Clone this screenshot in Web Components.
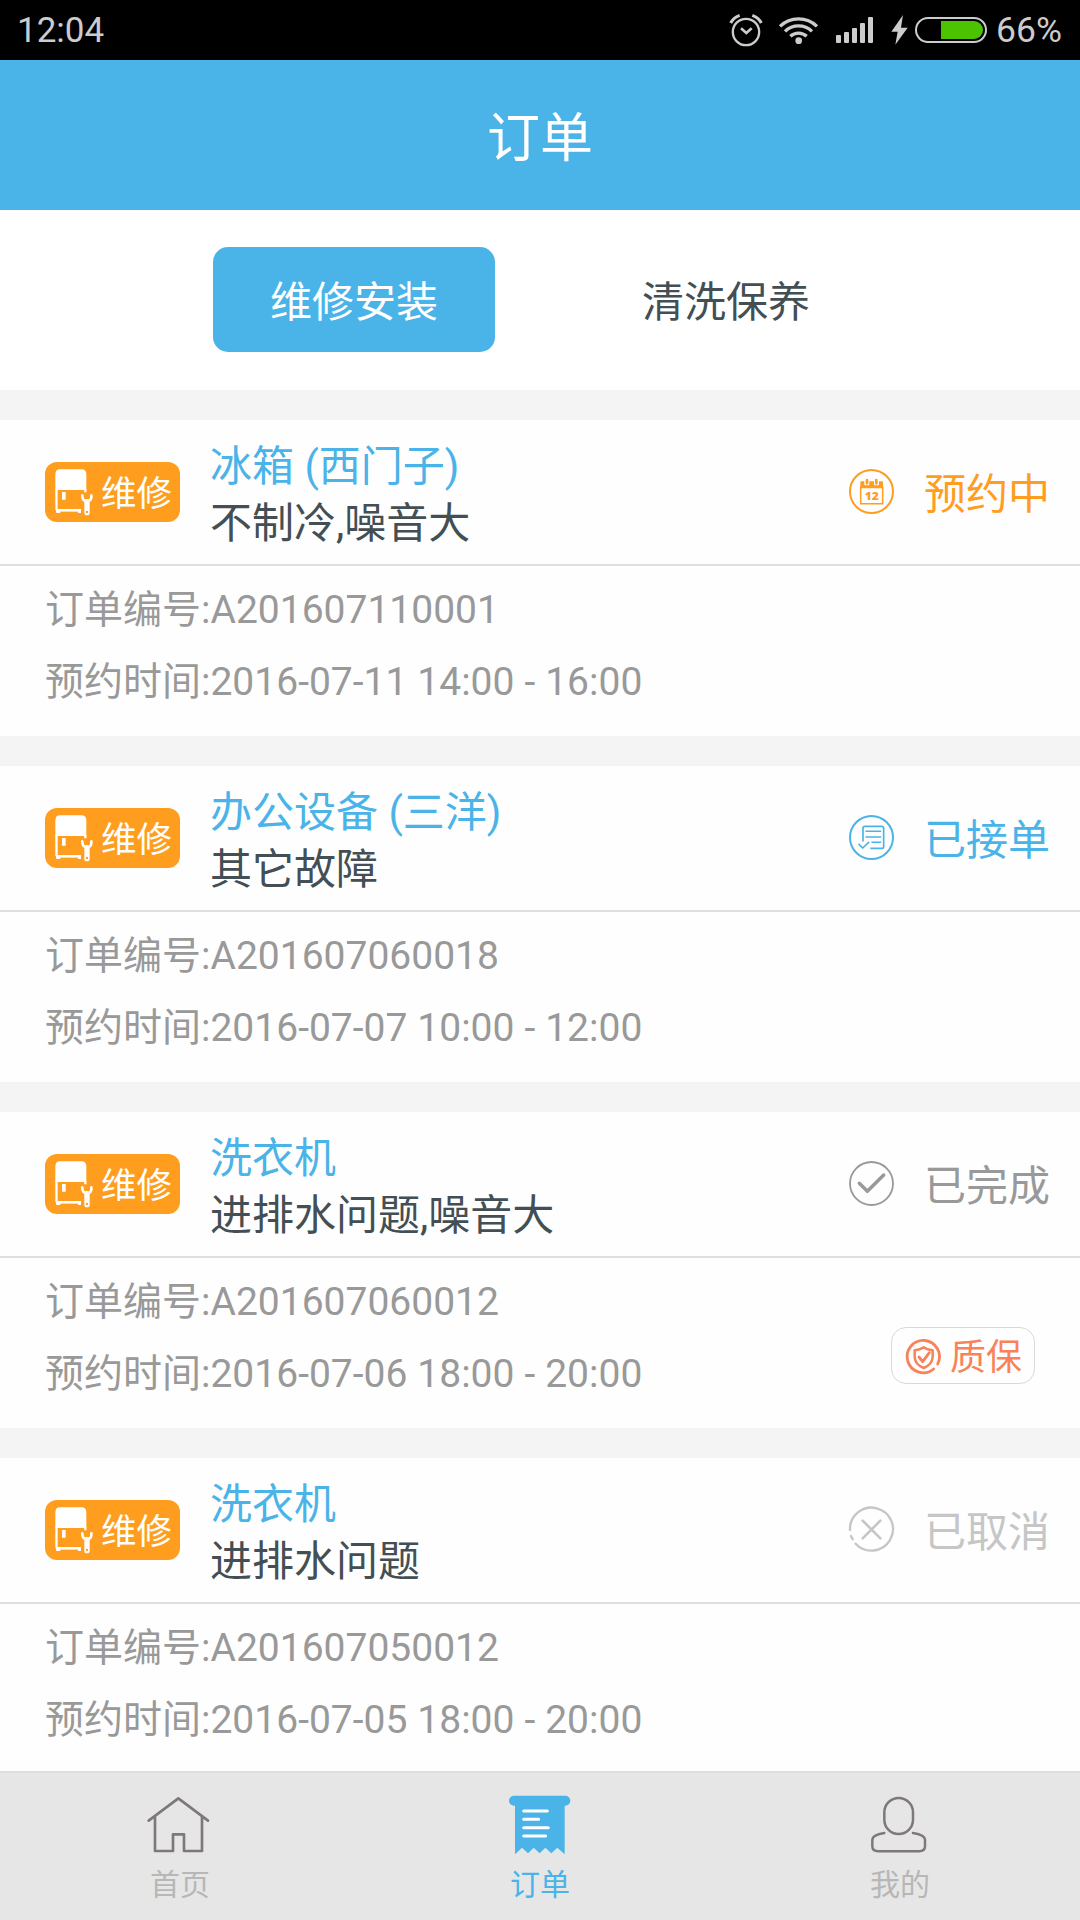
<!DOCTYPE html>
<html lang="zh-CN">
<head>
<meta charset="UTF-8">
<meta name="viewport" content="width=device-width, initial-scale=1.0">
<title>订单</title>
<style>
  * { box-sizing: border-box; }
  html, body { margin: 0; padding: 0; height: 100%; }
  body { background: #f4f4f4; overflow: hidden; font-family: Roboto, 'Noto Sans CJK SC', sans-serif; }
</style>
</head>
<body>
<orders-page></orders-page>

<script>
// every icon: width, height, viewBox, markup
const ICONS = {
  alarm: [32, 32, '90 39 96 96', `
    <g fill="none" stroke="currentColor">
      <circle cx="138" cy="93" r="39.5" stroke-width="7"/>
      <path d="M123 82l16 14 16-14" stroke-width="8"/>
      <path d="M92 66Q100 50 119 43M184 66Q176 50 157 43" stroke-width="9"/>
    </g>`],
  wifi: [39, 28, '238 46 117 84', `
    <g fill="none" stroke="currentColor" stroke-width="10">
      <path d="M241 77a80 80 0 0 1 111 0M256 92a58 58 0 0 1 81 0M272 107a36 36 0 0 1 49 0"/>
    </g>
    <circle cx="297" cy="120" r="10" fill="currentColor"/>`],
  signal: [37, 26, '408 51 111 78', `
    <g fill="currentColor">
      <rect x="408" y="105" width="15" height="24" rx="3"/>
      <rect x="432" y="96" width="15" height="33" rx="3"/>
      <rect x="456" y="84" width="15" height="45" rx="3"/>
      <rect x="480" y="69" width="15" height="60" rx="3"/>
      <rect x="504" y="51" width="15" height="78" rx="3"/>
    </g>`],
  bolt: [17, 30, '572 45 51 90', `
    <path d="M608 45L573 95H592L585 134L622 83H602Z" fill="currentColor"/>`],
  battery: [72, 26, '645 51 216 78', `
    <rect x="648" y="54" width="210" height="72" rx="36" fill="none" stroke="currentColor" stroke-width="6"/>
    <path d="M723 63H822a27 27 0 0 1 0 54H723Z" fill="#4bc300"/>`],
  fridge: [38, 46, '76 120 114 138', `
    <path fill="#fff" d="M91 121H155Q170 121 170 137V183H77V137Q77 121 91 121Z"/>
    <path fill="none" stroke="#fff" stroke-width="7" d="M80.500 180V240Q81 244 86 244H150M167 180V190"/>
    <path fill="#fff" d="M78 240H154V252H145V247H92V252H80ZM97 189H108V212H97Z"/>
    <path fill="none" stroke="#fff" stroke-width="8" stroke-linecap="round" d="M158 199Q157 216 172 216Q187 216 185 199"/>
    <path fill="none" stroke="#fff" stroke-width="16" stroke-linecap="round" d="M172 218V251"/>
    <circle cx="172" cy="249" r="3.500" fill="#ff9d1e"/>`],
  booking: [45, 45, '57 87 135 135', `
    <circle cx="124.500" cy="154.500" r="64.500" fill="none" stroke="currentColor" stroke-width="6"/>
    <path fill="currentColor" d="M91 127Q91 124 94 124H103V133Q103 136 106 136H115Q118 136 118 133V124H132V133Q132 136 135 136H144Q147 136 147 133V124H156Q159 124 159 127V145H91Z"/>
    <path fill="none" stroke="currentColor" stroke-width="4.500" d="M92 140V191H158V140"/>
    <path stroke="currentColor" stroke-width="8" stroke-linecap="round" d="M111 120V130M139 120V130"/>
    <text x="125.500" y="180" text-anchor="middle" font-family="Open Sans" font-weight="800" font-size="33" textLength="42" lengthAdjust="spacingAndGlyphs" fill="currentColor">12</text>`],
  accepted: [45, 45, '57 75 135 135', `
    <g fill="none" stroke="currentColor" stroke-width="5" stroke-linecap="round" stroke-linejoin="round">
      <circle cx="124.500" cy="142.500" r="64.500" stroke-width="6"/>
      <path d="M99 153V115Q99 109 105 109H155Q161 109 161 115V170Q161 175 155 175H123M87 163L98 174L116 157"/>
      <path d="M108 124H152M108 141H152M126 157H152" stroke-width="4.500"/>
    </g>`],
  done: [45, 45, '57 63 135 135', `
    <circle cx="124.500" cy="130.500" r="64.500" fill="none" stroke="currentColor" stroke-width="5.500"/>
    <path d="M88 130L112 154L161 105" fill="none" stroke="currentColor" stroke-width="10.500" stroke-linecap="round" stroke-linejoin="round"/>`],
  cancelled: [45, 45, '57 81 135 135', `
    <g fill="none" stroke="currentColor" stroke-linecap="round">
      <path d="M60 150A64.500 64.500 0 1 1 77 191" stroke-width="7"/>
      <path d="M63 168L68 178" stroke-width="7"/>
      <path d="M98 122L151 175M151 122L98 175" stroke-width="8"/>
    </g>`],
  shield: [35, 35, '228 597 105 105', `
    <g fill="none" stroke="currentColor" stroke-width="8.500" stroke-linecap="round" stroke-linejoin="round">
      <path d="M311 687A48.500 48.500 0 1 1 323 672"/>
      <path d="M281 622C272 629 262 630 254 631V651C255 668 266 678 281 684C296 678 307 668 308 651V631C300 630 290 629 281 622Z" stroke-width="7.500"/>
      <path d="M267 651L278 665L298 638"/>
    </g>`],
  home: [63, 60, '141 106 189 180', `
    <g fill="none" stroke="#7f7878" stroke-width="8" stroke-linecap="round" stroke-linejoin="round">
      <path d="M146 183L235 116L324 183"/>
      <path d="M165 172V274H219V224H252V274H306V172"/>
    </g>`],
  orders: [63, 60, '1224 106 189 180', `
    <path fill="#4ab3e8" d="M1242 108H1396A15 15 0 0 1 1396 138H1394V284L1372 264L1354 281L1336 264L1319 281L1301 264L1284 281L1266 264L1245 284V138H1242A15 15 0 0 1 1242 108Z"/>
    <path stroke="#fff" stroke-width="9" stroke-linecap="round" d="M1271 154H1342M1271 179H1316M1271 204H1345M1271 229H1337"/>`],
  profile: [63, 60, '142 106 189 180', `
    <g fill="none" stroke="#7f7878" stroke-width="7.500" stroke-linecap="round">
      <path d="M194 158A43 43 0 0 1 280 158V180A43 43 0 0 1 194 180Z"/>
      <path d="M194 220Q158 226 158 240V260Q158 275 176 275H298Q316 275 316 260V240Q316 226 280 220"/>
    </g>`]
};

class AppIcon extends HTMLElement {
  constructor() {
    super();
    this.attachShadow({ mode: 'open' });
  }

  connectedCallback() {
    const [width, height, viewBox, markup] = ICONS[this.getAttribute('name')];
    this.shadowRoot.innerHTML = `
      <style>
        :host { display: block; flex: none; }
        svg { display: block; overflow: visible; }
      </style>
      <svg width="${width}" height="${height}" viewBox="${viewBox}" aria-hidden="true">${markup}</svg>
    `;
  }
}

const STATUS_BAR_TEMPLATE = document.createElement('template');
STATUS_BAR_TEMPLATE.innerHTML = `
  <style>
    :host { display: flex; justify-content: space-between; height: 60px; padding: 0 18px 0 17px; background: #000; color: #cccccc; font-size: 35px; line-height: 62px; }
    .icons { display: flex; align-items: center; }
    .icons app-icon { margin-bottom: 1px; }
    .icons .wifi { margin-left: 17px; }
    .icons .signal { margin-left: 18px; }
    .icons .bolt { margin-left: 18px; }
    .icons .battery { margin-left: 7px; margin-right: 9px; }
    .charge { font-size: 35.5px; }
  </style>
  <span><slot name="time"></slot></span>
  <div class="icons">
    <app-icon name="alarm"></app-icon>
    <app-icon class="wifi" name="wifi"></app-icon>
    <app-icon class="signal" name="signal"></app-icon>
    <app-icon class="bolt" name="bolt"></app-icon>
    <app-icon class="battery" name="battery"></app-icon>
    <span class="charge"><slot name="charge"></slot></span>
  </div>
`;

class StatusBar extends HTMLElement {
  constructor() {
    super();
    this.attachShadow({ mode: 'open' });
    this.shadowRoot.appendChild(STATUS_BAR_TEMPLATE.content.cloneNode(true));
  }
}

const PAGE_HEADER_TEMPLATE = document.createElement('template');
PAGE_HEADER_TEMPLATE.innerHTML = `
  <style>
    :host { display: block; height: 150px; background: #4ab3e8; color: #fff; text-align: center; }
    h1 { margin: 0; font-size: 53px; font-weight: 400; line-height: 158px; }
  </style>
  <h1><slot></slot></h1>
`;

class PageHeader extends HTMLElement {
  constructor() {
    super();
    this.attachShadow({ mode: 'open' });
    this.shadowRoot.appendChild(PAGE_HEADER_TEMPLATE.content.cloneNode(true));
  }
}

const ORDER_TABS_TEMPLATE = document.createElement('template');
ORDER_TABS_TEMPLATE.innerHTML = `
  <style>
    :host { display: flex; justify-content: center; align-items: flex-start; gap: 90px; height: 180px; padding-top: 37px; background: #fff; }
    ::slotted(button) { width: 282px; height: 105px; padding: 6px 0 0; border: none; border-radius: 15px; background: transparent; color: #434f54; font: inherit; font-size: 42px; line-height: 99px; }
    ::slotted(button.active) { background: #4ab3e8; color: #fff; }
  </style>
  <slot></slot>
`;

class OrderTabs extends HTMLElement {
  constructor() {
    super();
    this.attachShadow({ mode: 'open' });
    this.shadowRoot.appendChild(ORDER_TABS_TEMPLATE.content.cloneNode(true));
    this.addEventListener('click', this.handleClick);
  }

  handleClick(event) {
    const tab = event.target.closest('button');
    if (!tab) return;
    this.querySelectorAll('button').forEach(item => item.classList.toggle('active', item === tab));
  }
}

const ORDER_CARD_TEMPLATE = document.createElement('template');
ORDER_CARD_TEMPLATE.innerHTML = `
  <style>
    :host { display: block; flex: none; height: 316px; background: #fefefe; }
    .head { box-sizing: border-box; display: flex; align-items: center; height: 146px; padding: 0 30px 0 45px; border-bottom: 2px solid #dfdfdf; }
    .badge { box-sizing: border-box; display: flex; align-items: center; width: 135px; height: 60px; padding-left: 10px; border-radius: 12px; background: #ff9d1e; color: #fff; }
    .badge span { margin-left: 8px; font-size: 35.5px; line-height: 60px; padding-top: 3px; }
    .names { flex: 1; margin-left: 30px; padding-top: 5px; font-size: 42px; line-height: 57px; }
    .device { color: #4ab3e8; }
    .fault { color: #434f54; }
    .status { display: flex; align-items: center; gap: 30px; font-size: 42px; line-height: 60px; }
    .status app-icon { margin-bottom: 1px; }
    .status span { padding-top: 5px; }
    .pending { color: #ff9d1e; }
    .accepted { color: #4ab3e8; }
    .done { color: #999; }
    .cancelled { color: #c6c6c6; }
    .body { box-sizing: border-box; display: flex; justify-content: space-between; align-items: flex-start; height: 170px; padding: 8px 45px 0; color: #999; font-size: 39px; line-height: 72px; word-spacing: 0.3px; }
    .warranty { box-sizing: border-box; display: flex; align-items: center; gap: 9px; width: 144px; height: 57px; margin-top: 61px; padding-left: 14px; border: 1px solid #d9d9d9; border-radius: 15px; color: #f98359; font-size: 36px; line-height: 55px; }
    .warranty app-icon { margin-top: 1px; }
    .warranty span { padding-top: 6px; }
  </style>
  <section class="head">
    <div class="badge"><app-icon name="fridge"></app-icon><span>维修</span></div>
    <div class="names">
      <div class="device"><slot name="device"></slot></div>
      <div class="fault"><slot name="fault"></slot></div>
    </div>
    <div class="status"></div>
  </section>
  <section class="body">
    <div>
      <div>订单编号:<slot name="number"></slot></div>
      <div>预约时间:<slot name="time"></slot></div>
    </div>
  </section>
`;

const STATUSES = {
  pending: ['booking', '预约中'],
  accepted: ['accepted', '已接单'],
  done: ['done', '已完成'],
  cancelled: ['cancelled', '已取消']
};

class OrderCard extends HTMLElement {
  constructor() {
    super();
    this.attachShadow({ mode: 'open' });
    this.shadowRoot.appendChild(ORDER_CARD_TEMPLATE.content.cloneNode(true));
  }

  connectedCallback() {
    const status = this.getAttribute('status');
    const [icon, label] = STATUSES[status];
    const statusBox = this.shadowRoot.querySelector('.status');
    statusBox.classList.add(status);
    statusBox.innerHTML = `<app-icon name="${icon}"></app-icon><span>${label}</span>`;

    if (this.hasAttribute('warranty')) {
      const warranty = document.createElement('div');
      warranty.className = 'warranty';
      warranty.innerHTML = '<app-icon name="shield"></app-icon><span>质保</span>';
      this.shadowRoot.querySelector('.body').appendChild(warranty);
    }
  }
}

const NAV_ITEM_TEMPLATE = document.createElement('template');
NAV_ITEM_TEMPLATE.innerHTML = `
  <style>
    :host { display: flex; flex: 1; flex-direction: column; align-items: center; padding-top: 22px; color: #b7b7b7; font-size: 30px; line-height: 40px; }
    :host([active]) { color: #4ab3e8; }
    .icon { margin-right: 3px; }
    :host([active]) .icon { margin-right: 2px; }
    span { margin-top: 10px; }
  </style>
  <div class="icon"><slot name="icon"></slot></div>
  <span><slot></slot></span>
`;

class NavItem extends HTMLElement {
  constructor() {
    super();
    this.attachShadow({ mode: 'open' });
    this.shadowRoot.appendChild(NAV_ITEM_TEMPLATE.content.cloneNode(true));
  }
}

const NAV_BAR_TEMPLATE = document.createElement('template');
NAV_BAR_TEMPLATE.innerHTML = `
  <style>
    :host { box-sizing: border-box; display: flex; flex: none; height: 149px; border-top: 2px solid #dedede; background: #e6e6e6; }
  </style>
  <slot></slot>
`;

class NavBar extends HTMLElement {
  constructor() {
    super();
    this.attachShadow({ mode: 'open' });
    this.shadowRoot.appendChild(NAV_BAR_TEMPLATE.content.cloneNode(true));
  }
}

const ORDERS_PAGE_TEMPLATE = document.createElement('template');
ORDERS_PAGE_TEMPLATE.innerHTML = `
  <style>
    :host { display: flex; flex-direction: column; width: 1080px; height: 1920px; background: #f4f4f4; }
    status-bar, page-header, order-tabs { box-sizing: border-box; flex: none; }
    .list { display: flex; flex: 1; flex-direction: column; gap: 30px; min-height: 0; padding-top: 30px; overflow: hidden; }
  </style>
  <status-bar><span slot="time">12:04</span><span slot="charge">66%</span></status-bar>
  <page-header>订单</page-header>
  <order-tabs>
    <button class="active" type="button">维修安装</button>
    <button type="button">清洗保养</button>
  </order-tabs>
  <main class="list"></main>
  <nav-bar>
    <nav-item><app-icon slot="icon" name="home"></app-icon>首页</nav-item>
    <nav-item active><app-icon slot="icon" name="orders"></app-icon>订单</nav-item>
    <nav-item><app-icon slot="icon" name="profile"></app-icon>我的</nav-item>
  </nav-bar>
`;

const ORDERS = [
  { device: '冰箱 (西门子)', fault: '不制冷,噪音大', number: 'A201607110001', time: '2016-07-11 14:00 - 16:00', status: 'pending' },
  { device: '办公设备 (三洋)', fault: '其它故障', number: 'A201607060018', time: '2016-07-07 10:00 - 12:00', status: 'accepted' },
  { device: '洗衣机', fault: '进排水问题,噪音大', number: 'A201607060012', time: '2016-07-06 18:00 - 20:00', status: 'done', warranty: true },
  { device: '洗衣机', fault: '进排水问题', number: 'A201607050012', time: '2016-07-05 18:00 - 20:00', status: 'cancelled' }
];

class OrdersPage extends HTMLElement {
  constructor() {
    super();
    this.attachShadow({ mode: 'open' });
    this.shadowRoot.appendChild(ORDERS_PAGE_TEMPLATE.content.cloneNode(true));
    this.list = this.shadowRoot.querySelector('.list');
  }

  connectedCallback() {
    this.list.innerHTML = ORDERS.map(order => `
      <order-card status="${order.status}"${order.warranty ? ' warranty' : ''}>
        <span slot="device">${order.device}</span>
        <span slot="fault">${order.fault}</span>
        <span slot="number">${order.number}</span>
        <span slot="time">${order.time}</span>
      </order-card>
    `).join('');
  }
}

customElements.define('app-icon', AppIcon);
customElements.define('status-bar', StatusBar);
customElements.define('page-header', PageHeader);
customElements.define('order-tabs', OrderTabs);
customElements.define('order-card', OrderCard);
customElements.define('nav-item', NavItem);
customElements.define('nav-bar', NavBar);
customElements.define('orders-page', OrdersPage);
</script>
</body>
</html>
